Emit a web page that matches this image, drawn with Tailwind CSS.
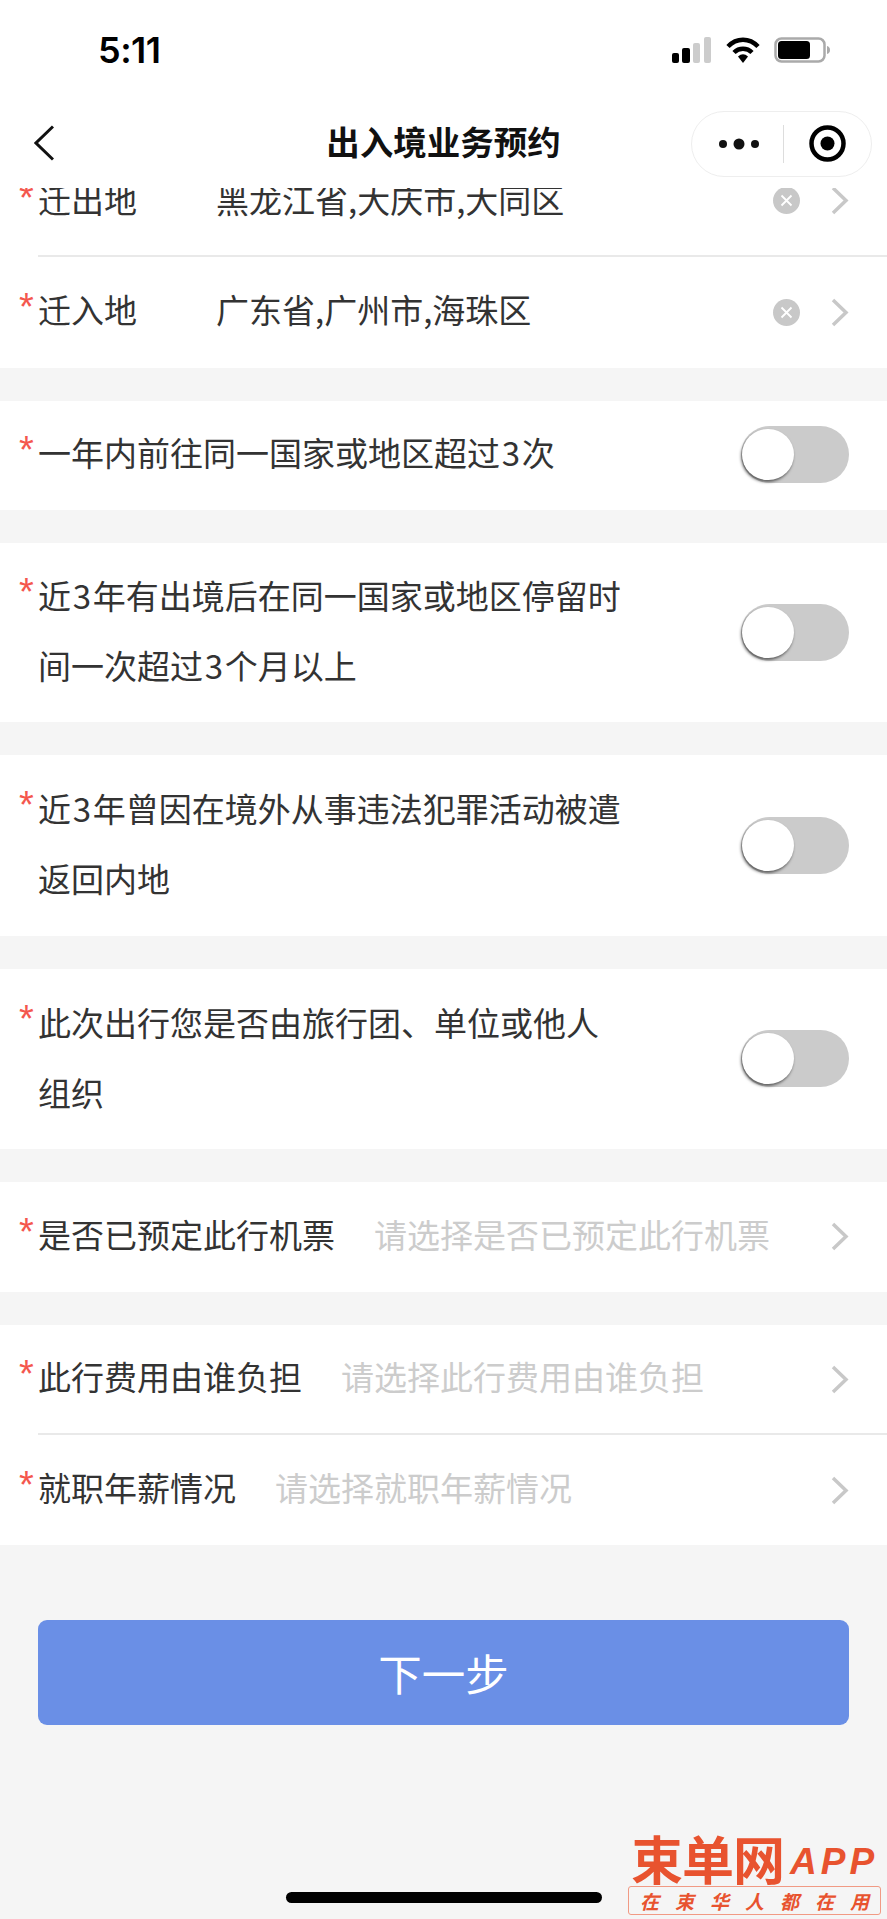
<!DOCTYPE html>
<html lang="zh-CN">
<head>
    <meta charset="UTF-8">
    <meta name="viewport" content="width=device-width, initial-scale=1.0">
    <title>出入境业务预约</title>
    <script src="https://cdn.jsdelivr.net/npm/@tailwindcss/browser@4"></script>
</head>
<body class="bg-[#f5f5f5] font-['Noto_Sans_CJK_SC',sans-serif] text-[33px] text-[#333]">
<div class="relative w-[887px] h-[1919px] overflow-hidden flex flex-col">

    <!-- Status bar + nav -->
    <header class="bg-white shrink-0">
        <div class="h-[99px] flex items-center justify-between pl-[98px] pr-[57px]">
            <span class="font-['Inter',sans-serif] font-semibold text-[36px] leading-none tracking-[-0.5px] text-black">5:11</span>
            <div class="flex items-center">
                <svg width="39" height="26" viewBox="0 0 39 26">
                    <rect x="0" y="16" width="7" height="10" rx="2" fill="#000"/>
                    <rect x="10" y="11" width="8" height="15" rx="2" fill="#000"/>
                    <rect x="21" y="6" width="7" height="20" rx="2" fill="#ccc"/>
                    <rect x="32" y="0" width="7" height="26" rx="2" fill="#ccc"/>
                </svg>
                <svg class="ml-[15px]" width="34" height="26" viewBox="0 0 34 26" fill="none" stroke="#000" stroke-width="4.500">
                    <path d="M2 9.500C10.500 .5 23.500 .5 32 9.500"/>
                    <path d="M8 15.500C13 10.500 21 10.500 26 15.500"/>
                    <path d="M12 19.500Q17 15 22 19.500L17 26Z" fill="#000" stroke="none"/>
                </svg>
                <svg class="ml-[14px]" width="56" height="26" viewBox="0 0 56 26">
                    <rect x="1.500" y="1.500" width="49" height="23" rx="6" fill="none" stroke="#aaa" stroke-width="2.500"/>
                    <rect x="4" y="4" width="32" height="18" rx="3.500" fill="#000"/>
                    <path d="M53 9c2 .6 3 2 3 4s-1 3.400-3 4z" fill="#aaa"/>
                </svg>
            </div>
        </div>
        <nav class="h-[89px] grid grid-cols-[1fr_auto_1fr] items-center">
            <svg class="ml-[34px] -mt-[1px]" width="20" height="36" viewBox="0 0 20 36" fill="none" stroke="#111" stroke-width="3">
                <path d="M19 1.500 2 18l17 16.500"/>
            </svg>
            <h1 class="text-[33.500px] font-bold text-[#111] leading-none -mt-[5px]">出入境业务预约</h1>
            <div class="justify-self-end mr-[15px] w-[181px] h-[66px] rounded-full border border-[#eee] bg-white flex items-center">
                <div class="w-[91px] pl-[2px] flex justify-center">
                    <svg width="40" height="12" viewBox="0 0 40 12" fill="#111">
                        <circle cx="4" cy="6" r="4"/>
                        <circle cx="20" cy="6" r="5.500"/>
                        <circle cx="36" cy="6" r="4"/>
                    </svg>
                </div>
                <div class="w-px h-[38px] bg-[#ddd]"></div>
                <div class="flex-1 flex justify-center">
                    <svg width="37" height="37" viewBox="0 0 37 37">
                        <circle cx="18.500" cy="18.500" r="16" fill="none" stroke="#000" stroke-width="4.500"/>
                        <circle cx="18.500" cy="18.500" r="7" fill="#000"/>
                    </svg>
                </div>
            </div>
        </nav>
    </header>

    <!-- Scrolled form, first row is partly under the header -->
    <main class="flex-1 overflow-hidden">
        <div class="-mt-[42px] flex flex-col gap-[33px]">

            <section class="bg-white">
                <div class="h-[109px] flex items-center pl-[38px] pr-[38px]">
                    <div class="relative w-[178px] -mt-[2px]"><span class="absolute -left-[19px] -top-[2px] text-[#f4574e] font-['Liberation_Sans',sans-serif] text-[38px] leading-[50px]">*</span>迁出地</div>
                    <span class="-mt-[2px]">黑龙江省,大庆市,大同区</span>
                    <svg class="ml-auto" width="27" height="27" viewBox="0 0 27 27"><circle cx="13.500" cy="13.500" r="13.500" fill="#c8c8c8"/><path d="M8.500 8.500l10 10M18.500 8.500l-10 10" stroke="#fff" stroke-width="1.800"/></svg>
                    <svg class="ml-[31px]" width="18" height="29" viewBox="0 0 18 29" fill="none" stroke="#c8c8c8" stroke-width="3.500"><path d="M2 2 15 14.500 2 27"/></svg>
                </div>
                <div class="ml-[38px] h-[2px] bg-[#e9e9e9]"></div>
                <div class="h-[111px] flex items-center pl-[38px] pr-[38px]">
                    <div class="relative w-[178px] -mt-[5px]"><span class="absolute -left-[19px] -top-[3px] text-[#f4574e] font-['Liberation_Sans',sans-serif] text-[38px] leading-[50px]">*</span>迁入地</div>
                    <span class="-mt-[5px]">广东省,广州市,海珠区</span>
                    <svg class="ml-auto" width="27" height="27" viewBox="0 0 27 27"><circle cx="13.500" cy="13.500" r="13.500" fill="#c8c8c8"/><path d="M8.500 8.500l10 10M18.500 8.500l-10 10" stroke="#fff" stroke-width="1.800"/></svg>
                    <svg class="ml-[31px]" width="18" height="29" viewBox="0 0 18 29" fill="none" stroke="#c8c8c8" stroke-width="3.500"><path d="M2 2 15 14.500 2 27"/></svg>
                </div>
            </section>

            <section class="bg-white h-[109px] flex items-center justify-between pl-[38px] pr-[38px]">
                <div class="relative w-[590px] -mt-[5px]"><span class="absolute -left-[19px] -top-[3px] text-[#f4574e] font-['Liberation_Sans',sans-serif] text-[38px] leading-[50px]">*</span>一年内前往同一国家或地区超过<span class="mx-[1.750px]">3</span>次</div>
                <div class="w-[108px] h-[57px] -mt-[2px] rounded-full bg-[#cbcbcb] py-[3px] pl-[1px]"><div class="w-[52px] h-[51px] rounded-full bg-white shadow-[-1px_2px_3px_rgba(0,0,0,0.55)]"></div></div>
            </section>

            <section class="bg-white h-[179px] flex items-center justify-between pl-[38px] pr-[38px]">
                <div class="relative w-[590px] leading-[70px] -mt-[5px]"><span class="absolute -left-[19px] top-[7px] text-[#f4574e] font-['Liberation_Sans',sans-serif] text-[38px] leading-[50px]">*</span>近<span class="mx-[1.750px]">3</span>年有出境后在同一国家或地区停留时间一次超过<span class="mx-[1.750px]">3</span>个月以上</div>
                <div class="w-[108px] h-[57px] rounded-full bg-[#cbcbcb] py-[3px] pl-[1px]"><div class="w-[52px] h-[51px] rounded-full bg-white shadow-[-1px_2px_3px_rgba(0,0,0,0.55)]"></div></div>
            </section>

            <section class="bg-white h-[181px] flex items-center justify-between pl-[38px] pr-[38px]">
                <div class="relative w-[590px] leading-[70px] -mt-[5px]"><span class="absolute -left-[19px] top-[7px] text-[#f4574e] font-['Liberation_Sans',sans-serif] text-[38px] leading-[50px]">*</span>近<span class="mx-[1.750px]">3</span>年曾因在境外从事违法犯罪活动被遣返回内地</div>
                <div class="w-[108px] h-[57px] rounded-full bg-[#cbcbcb] py-[3px] pl-[1px]"><div class="w-[52px] h-[51px] rounded-full bg-white shadow-[-1px_2px_3px_rgba(0,0,0,0.55)]"></div></div>
            </section>

            <section class="bg-white h-[180px] flex items-center justify-between pl-[38px] pr-[38px]">
                <div class="relative w-[590px] leading-[70px] -mt-[5px]"><span class="absolute -left-[19px] top-[7px] text-[#f4574e] font-['Liberation_Sans',sans-serif] text-[38px] leading-[50px]">*</span>此次出行您是否由旅行团、单位或他人组织</div>
                <div class="w-[108px] h-[57px] -mt-[1px] rounded-full bg-[#cbcbcb] py-[3px] pl-[1px]"><div class="w-[52px] h-[51px] rounded-full bg-white shadow-[-1px_2px_3px_rgba(0,0,0,0.55)]"></div></div>
            </section>

            <section class="bg-white h-[110px] flex items-center pl-[38px] pr-[38px]">
                <div class="relative -mt-[4px]"><span class="absolute -left-[19px] -top-[3px] text-[#f4574e] font-['Liberation_Sans',sans-serif] text-[38px] leading-[50px]">*</span>是否已预定此行机票</div>
                <span class="ml-[39px] text-[#ccc] -mt-[4px]">请选择是否已预定此行机票</span>
                <svg class="ml-auto -mt-[2px]" width="18" height="29" viewBox="0 0 18 29" fill="none" stroke="#c8c8c8" stroke-width="3.500"><path d="M2 2 15 14.500 2 27"/></svg>
            </section>

            <section class="bg-white">
                <div class="h-[108px] flex items-center pl-[38px] pr-[38px]">
                    <div class="relative -mt-[4px]"><span class="absolute -left-[19px] -top-[3px] text-[#f4574e] font-['Liberation_Sans',sans-serif] text-[38px] leading-[50px]">*</span>此行费用由谁负担</div>
                    <span class="ml-[39px] text-[#ccc] -mt-[4px]">请选择此行费用由谁负担</span>
                    <svg class="ml-auto" width="18" height="29" viewBox="0 0 18 29" fill="none" stroke="#c8c8c8" stroke-width="3.500"><path d="M2 2 15 14.500 2 27"/></svg>
                </div>
                <div class="ml-[38px] h-[2px] bg-[#e9e9e9]"></div>
                <div class="h-[110px] flex items-center pl-[38px] pr-[38px]">
                    <div class="relative -mt-[4px]"><span class="absolute -left-[19px] -top-[3px] text-[#f4574e] font-['Liberation_Sans',sans-serif] text-[38px] leading-[50px]">*</span>就职年薪情况</div>
                    <span class="ml-[39px] text-[#ccc] -mt-[4px]">请选择就职年薪情况</span>
                    <svg class="ml-auto" width="18" height="29" viewBox="0 0 18 29" fill="none" stroke="#c8c8c8" stroke-width="3.500"><path d="M2 2 15 14.500 2 27"/></svg>
                </div>
            </section>

            <button class="mx-[38px] mt-[42px] h-[105px] rounded-[9px] bg-[#6a8fe6] text-white text-[43.500px] leading-none">下一步</button>
        </div>
    </main>

    <!-- Home indicator -->
    <div class="absolute left-[286px] top-[1892px] w-[316px] h-[11px] rounded-full bg-black"></div>

    <!-- Watermark -->
    <div class="absolute left-[628px] top-[1828px] w-[253px] text-[#e8532f]">
        <div class="flex items-end h-[58px]">
            <span class="ml-[3px] text-[52px] leading-[56px] font-bold tracking-[-1px]">束单网</span>
            <span class="ml-[6px] mb-[6px] font-['Liberation_Sans',sans-serif] italic font-bold text-[37px] leading-none tracking-[4px]">APP</span>
        </div>
        <div class="h-[29px] border border-[#f19a84] rounded-[3px] flex items-center justify-between px-[11px] text-[19px] leading-none italic font-bold">
            <span>在</span><span>束</span><span>华</span><span>人</span><span>都</span><span>在</span><span>用</span>
        </div>
    </div>
</div>
</body>
</html>
